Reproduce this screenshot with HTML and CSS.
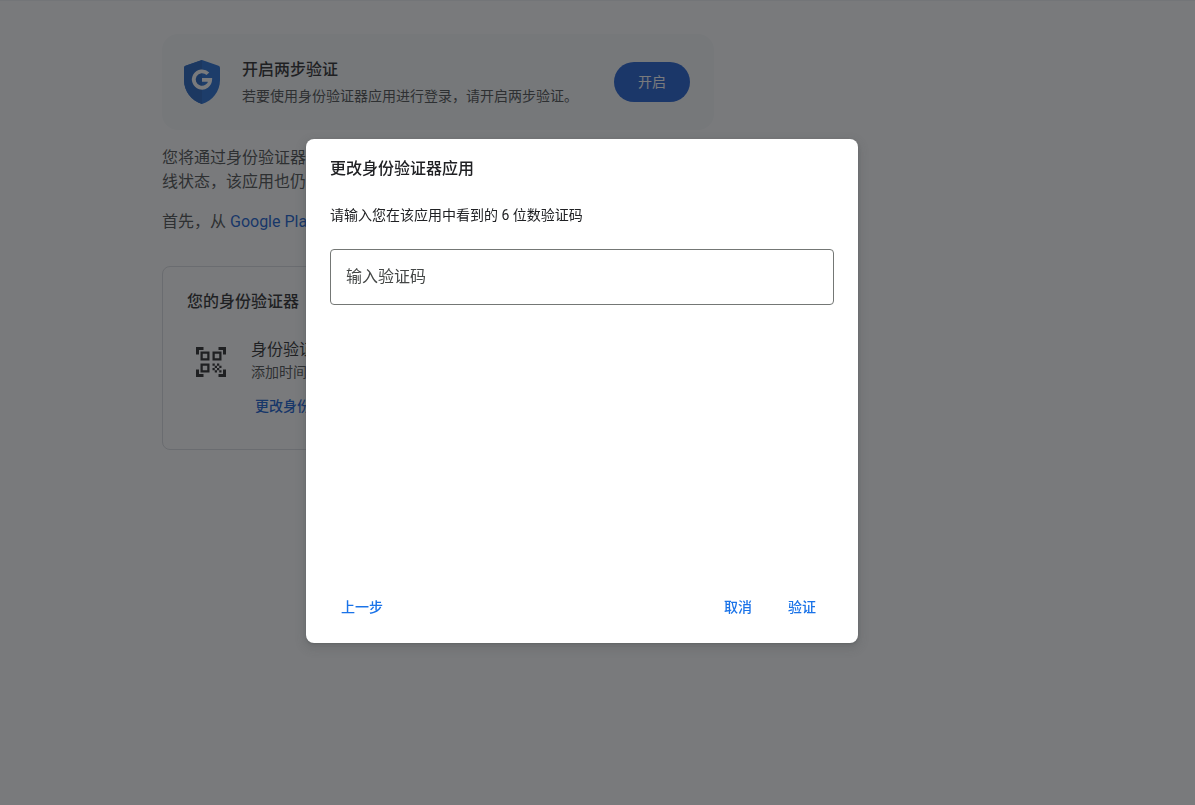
FILE: index.html
```html
<!DOCTYPE html>
<html lang="zh-CN">
<head>
<meta charset="UTF-8">
<meta name="viewport" content="width=device-width, initial-scale=1.0">
<title>身份验证器应用</title>
<link rel="stylesheet" href="styles.css">
</head>
<body>
  <main class="page">
    <section class="banner">
      <svg class="shield" width="36" height="44" viewBox="0 0 36 44">
        <path fill="#1967d2" d="M18 0 34.500 5.800Q36 6.400 36 8V20C36 31.500 28.500 40.500 18 44 7.500 40.500 0 31.500 0 20V8Q0 6.400 1.500 5.800Z"/>
        <path fill="#185abc" d="M18 0V44C7.500 40.500 0 31.500 0 20V8Q0 6.400 1.500 5.800Z"/>
        <path fill="none" stroke="#fff" stroke-width="3.800" d="M23.900 13.800A8.200 8.200 0 1 0 26.200 19.800H18"/>
      </svg>
      <div class="banner-text">
        <h2>开启两步验证</h2>
        <p>若要使用身份验证器应用进行登录，请开启两步验证。</p>
      </div>
      <button class="pill-button">开启</button>
    </section>

    <p class="intro">您将通过身份验证器<br>线状态，该应用也仍</p>
    <p class="intro">首先，从 <a href="#">Google Play</a></p>

    <section class="card">
      <h2>您的身份验证器</h2>
      <div class="card-row">
        <svg class="qr" width="30" height="30" viewBox="2 2 20 20" fill="#1f1f1f">
          <path d="M9.500 6.500v3h-3v-3h3M11 5H5v6h6V5zM9.500 14.500v3h-3v-3h3M11 13H5v6h6v-6zM17.500 6.500v3h-3v-3h3M19 5h-6v6h6V5z"/>
          <path d="M13 13h1.500v1.500H13zM14.500 14.500H16V16h-1.500zM16 13h1.500v1.500H16zM13 16h1.500v1.500H13zM14.500 17.500H16V19h-1.500zM16 16h1.500v1.500H16zM17.500 14.500H19V16h-1.500zM17.500 17.500H19V19h-1.500z"/>
          <path d="M22 7h-2V4h-3V2h5v5zM22 22v-5h-2v3h-3v2h5zM2 22h5v-2H4v-3H2v5zM2 2v5h2V4h3V2H2z"/>
        </svg>
        <div class="card-text">
          <h3>身份验证器</h3>
          <p>添加时间：刚刚</p>
          <a href="#">更改身份验证器应用</a>
        </div>
      </div>
    </section>
  </main>

  <div class="scrim">
    <div class="dialog">
      <h1>更改身份验证器应用</h1>
      <p>请输入您在该应用中看到的 6 位数验证码</p>
      <input class="code-input" type="text" placeholder="输入验证码" autocomplete="off">
      <div class="actions">
        <button class="back">上一步</button>
        <button>取消</button>
        <button>验证</button>
      </div>
    </div>
  </div>
</body>
</html>
```
FILE: styles.css
```css
* {
  box-sizing: border-box;
}
body {
  margin: 0;
  height: 805px;
  overflow: hidden;
  background: #fff;
  color: #1f1f1f;
  font-family: Roboto, "Noto Sans CJK SC", sans-serif;
}
h1, h2, h3, p {
  margin: 0;
}
h1, h2 {
  font-size: 16px;
  line-height: 24px;
  font-weight: 500;
}
a {
  color: #0b57d0;
  text-decoration: none;
}
button, input {
  font-family: inherit;
}

.page {
  height: 805px;
  padding: 33px 0 0 162px;
  border-top: 1px solid #f1f3f4;
}
.banner {
  display: flex;
  align-items: center;
  width: 552px;
  height: 96px;
  margin-bottom: 16px;
  padding: 0 24px 0 22px;
  border-radius: 16px;
  background: #f8fafb;
}
.banner-text {
  flex-grow: 1;
  margin-left: 22px;
  padding-top: 1px;
}
.banner-text p {
  margin-top: 3px;
  color: #444746;
  font-size: 14px;
  line-height: 22px;
}
.pill-button {
  width: 76px;
  height: 40px;
  padding: 0 0 2px;
  border: none;
  border-radius: 20px;
  background: #1558d0;
  color: #fff;
  font-size: 14px;
  font-weight: 400;
}
.intro {
  width: 552px;
  margin-bottom: 16px;
  color: #444746;
  font-size: 16px;
  line-height: 24px;
}

/* authenticator card */
.card {
  width: 552px;
  height: 184px;
  margin-top: 32px;
  padding: 23px 24px;
  border: 1px solid #dadce0;
  border-radius: 8px;
}
.card-row {
  display: flex;
  margin-top: 24px;
}
.qr {
  margin: 9px 0 0 9px;
}
.card-text {
  margin-left: 25px;
}
.card-text h3 {
  font-size: 16px;
  line-height: 24px;
  font-weight: 400;
}
.card-text p {
  margin-top: -1px;
  color: #444746;
  font-size: 14px;
  line-height: 22px;
}
.card-text a {
  display: block;
  margin: 12px 0 0 4px;
  font-size: 14px;
  line-height: 22px;
  font-weight: 500;
}

/* dialog */
.scrim {
  position: fixed;
  inset: 0;
  padding: 139px 0 0 306px;
  background: rgba(32, 33, 36, 0.6);
}
.dialog {
  display: flex;
  flex-direction: column;
  width: 552px;
  height: 504px;
  padding: 18px 24px;
  border-radius: 8px;
  background: #fff;
  color: #202124;
  box-shadow: 0 1px 3px rgba(60, 64, 67, 0.3), 0 4px 8px 3px rgba(60, 64, 67, 0.15);
}
.dialog p {
  margin-top: 23px;
  font-size: 14px;
  line-height: 22px;
}
.code-input {
  height: 56px;
  margin-top: 23px;
  padding: 0 15px 2px;
  border: 1px solid #747775;
  border-radius: 4px;
  font-size: 16px;
}
.code-input::placeholder {
  color: #444746;
}
.actions {
  display: flex;
  margin-top: auto;
  padding: 0 6px 0 0;
}
.actions button {
  height: 36px;
  margin-left: 12px;
  padding: 0 12px 2px;
  border: none;
  background: none;
  color: #1a73e8;
  font-size: 14px;
  font-weight: 500;
}
.actions .back {
  margin: 0 auto 0 0;
  padding-left: 11px;
}
```
